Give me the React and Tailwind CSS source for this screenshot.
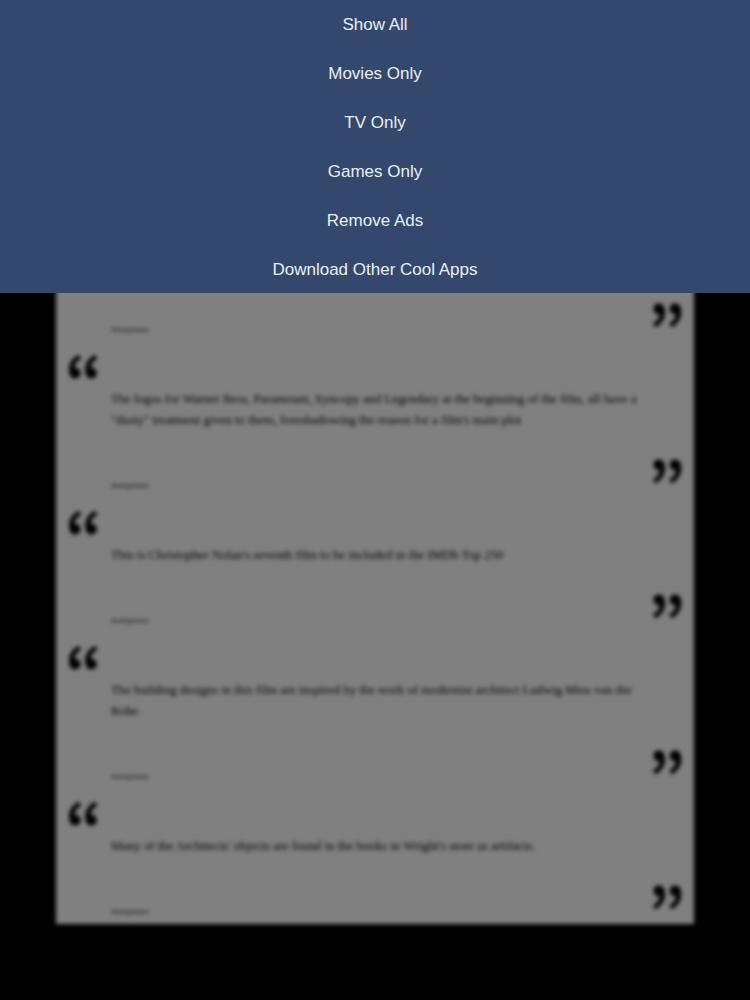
const menuItems = ["Show All", "Movies Only", "TV Only", "Games Only", "Remove Ads", "Download Other Cool Apps"];

const facts = [
  "The logos for Warner Bros, Paramount, Syncopy and Legendary at the beginning of the film, all have a \"dusty\" treatment given to them, foreshadowing the reason for a film's main plot",
  "This is Christopher Nolan's seventh film to be included in the IMDb Top 250",
  "The building designs in this film are inspired by the work of modernist architect Ludwig Mies van der Rohe.",
  "Many of the Architects' objects are found in the books in Wright's store as artifacts.",
];

function Quote({ children }) {
  return (
    <span className="block h-[25px] w-[31px] font-['Noto_Sans_CJK_JP',serif] font-bold text-[65px] leading-[60px] text-black">
      {children}
    </span>
  );
}

function FactFooter({ heightClass }) {
  return (
    <div className={`${heightClass} flex items-end justify-between pl-[43px] pb-[6px]`}>
      <span className="text-[6.5px] leading-[18px] font-bold text-[#303030] font-['Liberation_Sans',sans-serif]">Anonymous</span>
      <div className="pb-[17px] pr-[3px]">
        <Quote>”</Quote>
      </div>
    </div>
  );
}

function Fact({ text }) {
  return (
    <div>
      <div className="h-[44px] pt-[2px] -ml-[3px]">
        <Quote>“</Quote>
      </div>
      <p className="pl-[43px] pr-[40px] text-[12.75px] leading-[21px] text-black font-['Liberation_Serif',serif]">
        {text}
      </p>
      <FactFooter heightClass="h-[70px]" />
    </div>
  );
}

export default function App() {
  return (
    <div className="h-[1000px] w-[750px] overflow-hidden bg-black">
      {/* Dropdown menu */}
      <div className="h-[293px] bg-[#34476c] font-['Liberation_Sans',sans-serif]">
        {menuItems.map((item) => (
          <div key={item} className="h-[49px] flex items-center justify-center text-[17px] text-[#e8f0f8]">
            {item}
          </div>
        ))}
      </div>

      {/* Blurred page behind the menu */}
      <div className="h-[707px] overflow-hidden">
        <div className="-mt-[10px] blur-[2px]">
          <div className="mx-[56px] h-[641px] px-[12px] bg-[#808080]">
            <FactFooter heightClass="h-[62px]" />
            {facts.map((text) => (
              <Fact key={text} text={text} />
            ))}
          </div>
        </div>
      </div>
    </div>
  );
}
